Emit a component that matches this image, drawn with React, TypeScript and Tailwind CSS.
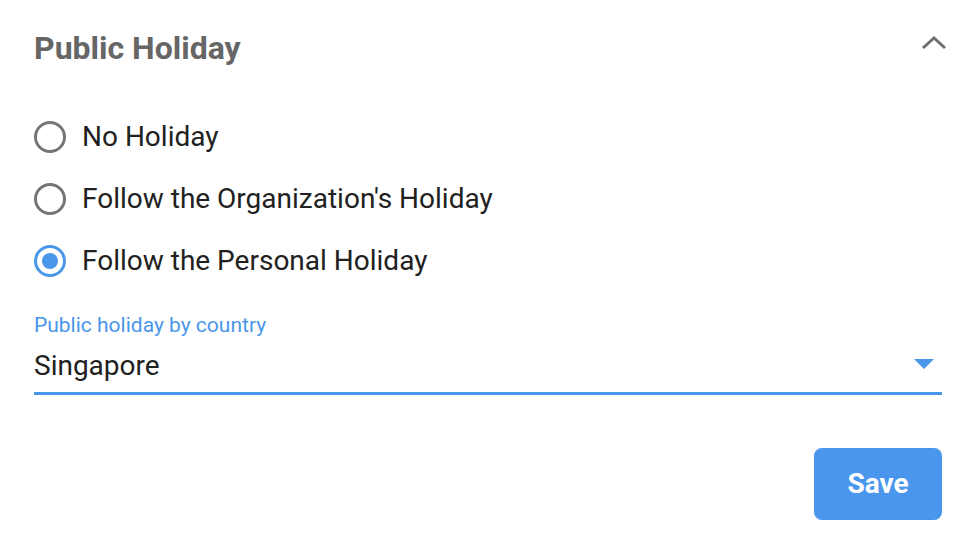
import { useState } from "react";

const options = [
  { id: "none", label: "No Holiday" },
  { id: "org", label: "Follow the Organization's Holiday" },
  { id: "personal", label: "Follow the Personal Holiday" },
];

export default function App() {
  const [selected, setSelected] = useState("personal");

  return (
    <div className="h-[534px] w-[974px] bg-white font-['Roboto',sans-serif]">
      <div className="pl-[34px] pr-[32px] pt-[28px]">
        <div className="flex items-center justify-between">
          <h2 className="text-[32px] font-bold leading-[40px] text-[#666666]">Public Holiday</h2>
          <svg width="26" height="16" viewBox="0 0 26 16" className="mr-[-5px] mt-[-10px]">
            <path d="M2 13 L13 3 L24 13" fill="none" stroke="#6f6f6f" strokeWidth="3" />
          </svg>
        </div>

        <div className="mt-[53px] flex flex-col gap-[30px]">
          {options.map((o) => {
            const on = selected === o.id;
            return (
              <label key={o.id} className="flex h-[32px] cursor-pointer items-center gap-[16px]" onClick={() => setSelected(o.id)}>
                <span
                  className={`flex h-[32px] w-[32px] items-center justify-center rounded-full border-[3px] ${
                    on ? "border-[#4a96e9]" : "border-[#757575]"
                  }`}
                >
                  {on && <span className="h-[16px] w-[16px] rounded-full bg-[#4a96e9]" />}
                </span>
                <span className="text-[28px] leading-none text-[#212121]">{o.label}</span>
              </label>
            );
          })}
        </div>

        <div className="mt-[36px]">
          <div className="text-[21px] leading-[24px] text-[#4a96e9]">Public holiday by country</div>
          <div className="flex h-[58px] items-center justify-between border-b-[3px] border-[#4a96e9] pt-[2px]">
            <span className="text-[28px] leading-none text-[#212121]">Singapore</span>
            <svg width="20" height="10" viewBox="0 0 20 10" className="mr-[8px] mb-[4px]">
              <path d="M0 0 L20 0 L10 10 Z" fill="#4a96e9" />
            </svg>
          </div>
        </div>

        <div className="mt-[53px] flex justify-end">
          <button className="h-[72px] w-[128px] rounded-[8px] bg-[#4a96ec] text-[28px] font-bold text-white">Save</button>
        </div>
      </div>
    </div>
  );
}
